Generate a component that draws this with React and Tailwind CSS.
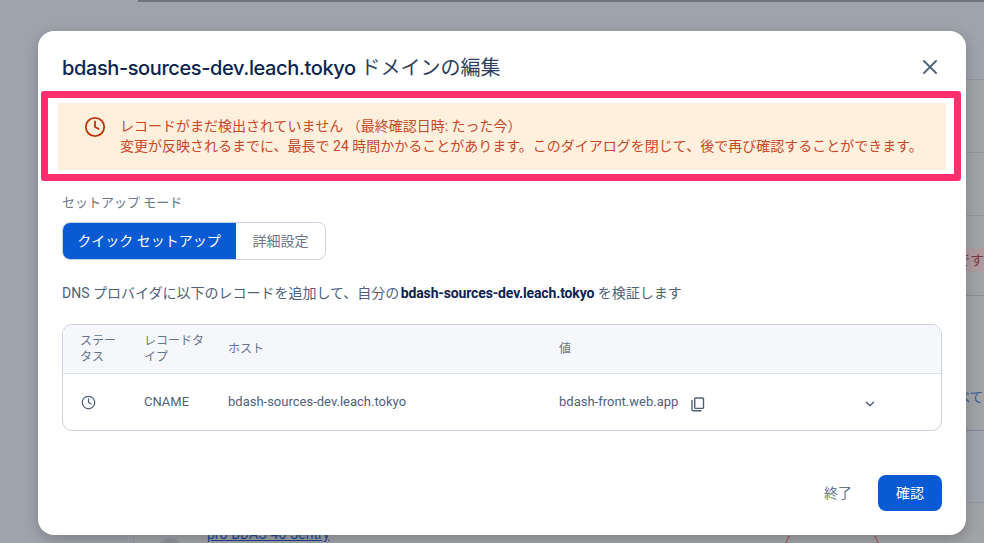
import React from "react";
import { X, Clock, ChevronDown } from "lucide-react";

const font = "font-['Roboto','Noto_Sans_CJK_JP',sans-serif]";

function CopyIcon() {
  return (
    <svg width="14" height="15" viewBox="0 0 14 15" fill="none" stroke="currentColor" strokeWidth="1.4" className="ml-[13px] mt-[4px]">
      <rect x="3.7" y="1" width="8.8" height="10.4" rx="1" />
      <path d="M1 3V12.7a1 1 0 0 0 1 1H10.5" />
    </svg>
  );
}

export default function App() {
  return (
    <div className={`relative w-[984px] h-[543px] overflow-hidden bg-[#9fa3ab] ${font}`}>
      {/* page behind the dialog */}
      <div className="absolute left-[133px] top-[79px] w-[851px] h-[464px] bg-[#a2a3a7] border-l border-[#92959c]" />
      <div className="absolute left-[138px] top-0 w-[846px] h-[2px] bg-[#71757e]" />
      <div className="absolute left-[966px] top-[79px] w-[18px] h-px bg-[#92969e]" />
      <div className="absolute left-[966px] top-[152px] w-[18px] h-px bg-[#92969e]" />
      <div className="absolute left-[966px] top-[215px] w-[18px] h-px bg-[#92969e]" />
      <div className="absolute left-[966px] top-[248px] w-[18px] h-[24px] bg-[#ad9ba0]" />
      <div className="absolute left-[956px] top-[248px] text-[14px] leading-[24px] text-[#7c3a3f] whitespace-nowrap">です</div>
      <div className="absolute left-[966px] top-[295px] w-[18px] h-px bg-[#8a8e96]" />
      <div className="absolute left-[956px] top-[387px] text-[14px] leading-[20px] text-[#3f5a97] whitespace-nowrap">べて</div>
      <div className="absolute left-[966px] top-[430px] w-[18px] h-[73px] bg-[#9fa3ab] border-t border-[#858992]" />
      <div className="absolute left-[966px] top-[502px] w-[18px] h-px bg-[#92969e]" />
      <div className="absolute left-[207px] top-[524px] text-[14px] leading-[20px] text-[#1d4795] underline whitespace-nowrap">pro-BDAS-46-Sentry</div>
      <div className="absolute left-[157px] top-[538px] w-[26px] h-[26px] rounded-full bg-[#8f939b]" />
      <svg className="absolute left-[780px] top-[535px]" width="104" height="8" viewBox="0 0 104 8" fill="none">
        <path d="M6 8C7 5 8 3 10 0" stroke="#b0404f" strokeWidth="1.2" strokeDasharray="2 1" />
        <path d="M98 8C97 5 96 3 94 0" stroke="#b0404f" strokeWidth="1.2" strokeDasharray="2 1" />
      </svg>

      {/* dialog */}
      <div className="absolute left-[38px] top-[31px] w-[928px] h-[504px] bg-white rounded-2xl shadow-[0_4px_14px_rgba(0,0,0,0.22)] flex flex-col">
        <div className="flex items-center justify-between pl-6 pr-6 h-[72px] shrink-0">
          <h2 className="mt-[1px] text-[20px] leading-[24px] whitespace-nowrap">
            <span className="font-['Inter'] font-medium text-[#0a2351] tracking-[-0.4px]">bdash-sources-dev.leach.tokyo</span>
            <span className="text-[#2d3f5e]"> ドメインの編集</span>
          </h2>
          <button className="text-[#55657f]"><X size={24} strokeWidth={2} /></button>
        </div>

        <div className="mx-5 h-[67px] bg-[#fff0de] flex items-start gap-[14px] pl-[26px] pt-[14px] text-[14px] leading-[19.5px] text-[#c8482a] shrink-0 whitespace-nowrap">
          <Clock size={22} strokeWidth={2} className="mt-[-1px] text-[#bf3a10] shrink-0" />
          <div>
            <div>レコードがまだ検出されていません （最終確認日時: たった今）</div>
            <div>変更が反映されるまでに、最長で 24 時間かかることがあります。このダイアログを閉じて、後で再び確認することができます。</div>
          </div>
        </div>

        <div className="px-6 pt-[25px] flex flex-col flex-1">
          <div className="text-[13px] leading-[16px] text-[#68758a]">セットアップ モード</div>
          <div className="mt-[11px] flex w-[264px] h-[38px] rounded-lg border border-[#ccd1dc] overflow-hidden text-[14px]">
            <div className="w-[174px] -ml-px -my-px bg-[#0a5ad4] text-white flex items-center justify-center">クイック セットアップ</div>
            <div className="flex-1 text-[#68758a] flex items-center justify-center">詳細設定</div>
          </div>
          <p className="mt-[23px] text-[14px] leading-[20px] text-[#4f5f7a] whitespace-nowrap">
            DNS プロバイダに以下のレコードを追加して、自分の <strong className="-ml-[2px] font-bold text-[#0a2351] tracking-[-0.14px]">bdash-sources-dev.leach.tokyo</strong> を検証します
          </p>
          <div className="mt-[21px] w-[880px] rounded-[10px] border border-[#ccd1dc] overflow-hidden">
            <div className="flex h-[49px] items-center bg-[#f6f7fb] border-b border-[#dfe2ea] text-[12px] leading-[16px] text-[#68758a]">
              <div className="w-[81px] pl-[17px] pr-[20px]">ステータス</div>
              <div className="w-[84px] pr-[20px]">レコードタイプ</div>
              <div className="w-[331px]">ホスト</div>
              <div className="flex-1">値</div>
            </div>
            <div className="flex h-[56px] items-center text-[13px] text-[#4f5f7a]">
              <div className="w-[81px] pl-[18px]"><Clock size={15} strokeWidth={2} /></div>
              <div className="w-[84px]">CNAME</div>
              <div className="w-[331px]">bdash-sources-dev.leach.tokyo</div>
              <div className="w-[304px] flex items-center">
                <span>bdash-front.web.app</span>
                <CopyIcon />
              </div>
              <ChevronDown size={14} strokeWidth={2.4} className="mt-[3px]" />
            </div>
          </div>
        </div>

        <div className="flex items-center justify-end gap-[26px] pr-6 pb-6 shrink-0 text-[14px]">
          <span className="text-[#68758a]">終了</span>
          <button className="w-[64px] h-[36px] rounded-lg bg-[#0a5ad4] text-white">確認</button>
        </div>
      </div>

      {/* annotation */}
      <div className="absolute left-[41px] top-[91px] w-[920px] h-[90px] border-[7px] border-[#ff2f6d] rounded-[3px]" />
    </div>
  );
}
